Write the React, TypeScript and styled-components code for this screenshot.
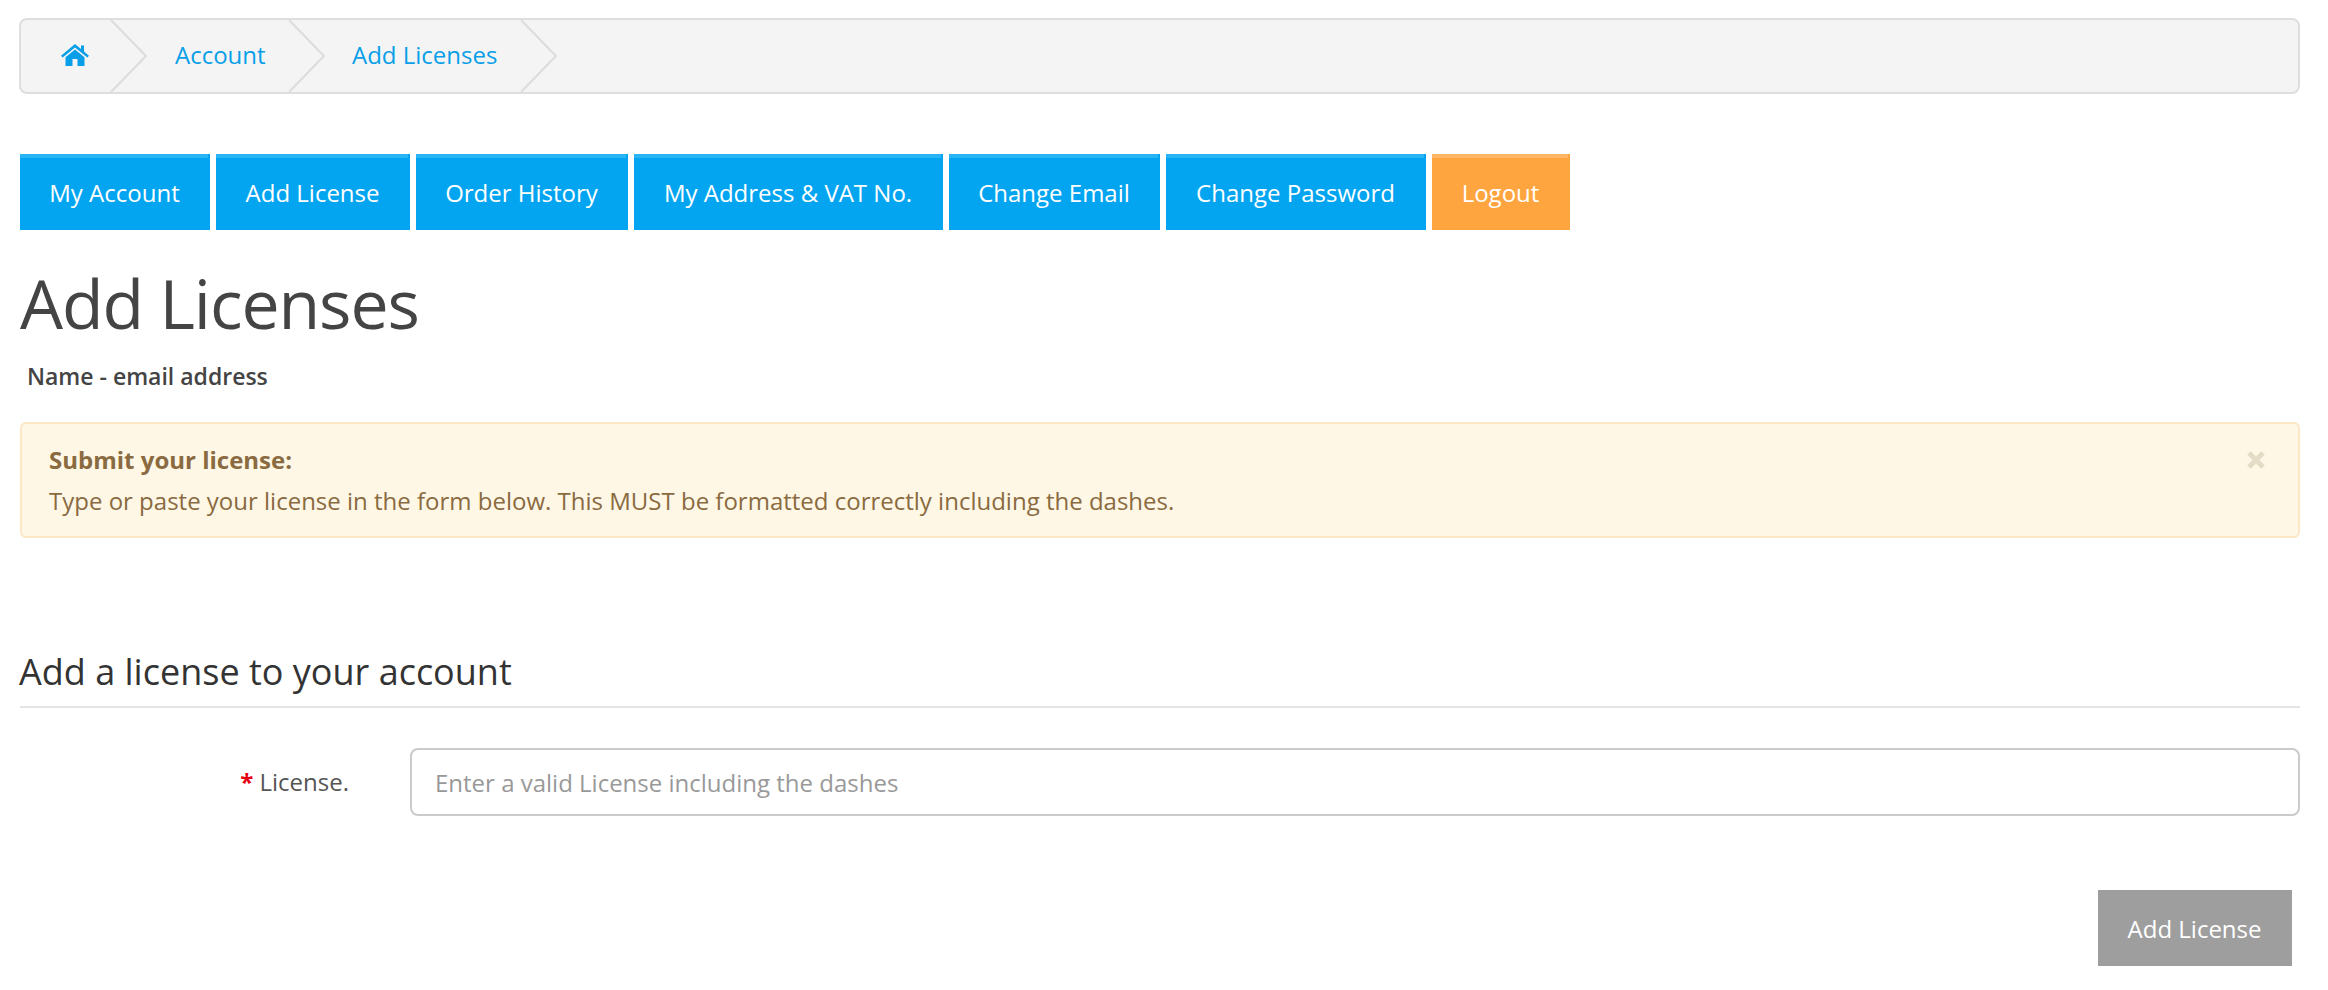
import React from "react";
import styled, { createGlobalStyle } from "styled-components";

const Global = createGlobalStyle`
  html, body { margin: 0; padding: 0; background: #fff; }
  body { font-family: "Open Sans", "Liberation Sans", sans-serif; }
`;

const Page = styled.div`
  width: 2328px;
  height: 990px;
  box-sizing: border-box;
  padding: 18px 28px 0 20px;
  overflow: hidden;
`;

const Breadcrumb = styled.nav`
  display: flex;
  align-items: stretch;
  box-sizing: border-box;
  height: 76px;
  background: #f4f4f4;
  border: 2px solid #dedede;
  border-radius: 8px;
  margin-left: -1px;
`;

const Crumb = styled.a<{ $width: number; $pad: number }>`
  position: relative;
  display: flex;
  align-items: center;
  box-sizing: border-box;
  width: ${(p) => p.$width}px;
  padding-left: ${(p) => p.$pad}px;
  padding-bottom: 2px;
  color: #089fe8;
  font-size: 24px;
  line-height: 1;
`;

const Chevron = styled.svg`
  position: absolute;
  top: 0;
  right: -38px;
  width: 38px;
  height: 72px;
`;

const Menu = styled.div`
  display: flex;
  gap: 6px;
  margin-top: 60px;
`;

const MenuButton = styled.a<{ $width: number; $tone: "blue" | "orange" }>`
  position: relative;
  display: flex;
  align-items: center;
  justify-content: center;
  box-sizing: border-box;
  width: ${(p) => p.$width}px;
  height: 76px;
  padding: 1px 1px 0 0;
  color: #fff;
  font-size: 24px;
  font-weight: 400;
  background: ${(p) => (p.$tone === "blue" ? "#03a5f0" : "#ffa540")};
  &::before {
    content: "";
    position: absolute;
    top: 0;
    left: 0;
    right: 2px;
    height: 4px;
    background: ${(p) => (p.$tone === "blue" ? "#29b4f5" : "#ffb765")};
  }
`;

const Title = styled.h1`
  margin: 27px 0 0;
  font-size: 68px;
  line-height: 92px;
  letter-spacing: -1.1px;
  font-weight: 400;
  color: #444;
`;

const UserLine = styled.div`
  margin: 12px 0 0 7px;
  font-size: 23px;
  line-height: 30px;
  font-weight: 600;
  color: #444;
`;

const Alert = styled.div`
  position: relative;
  box-sizing: border-box;
  height: 116px;
  margin-top: 31px;
  padding: 15px 27px 0;
  background: #fef7e6;
  border: 2px solid #fbe6c6;
  border-radius: 6px;
  color: #8a6a40;
  font-size: 24px;
  line-height: 41px;
`;

const AlertTitle = styled.strong`
  display: block;
  font-weight: 700;
`;

const Close = styled.svg`
  position: absolute;
  top: 26px;
  right: 32px;
  width: 20px;
  height: 20px;
`;

const SectionTitle = styled.h2`
  margin: 110px 0 0;
  padding-bottom: 11px;
  font-size: 36px;
  line-height: 47px;
  font-weight: 400;
  color: #333;
  border-bottom: 2px solid #e4e4e4;
`;

const SectionText = styled.span`
  display: block;
  margin-left: -1px;
`;

const FormRow = styled.div`
  display: flex;
  align-items: center;
  margin-top: 40px;
`;

const Label = styled.label`
  box-sizing: border-box;
  width: 390px;
  padding-right: 61px;
  text-align: right;
  color: #555;
  font-size: 24px;
  line-height: 32px;
`;

const Required = styled.span`
  color: #e60012;
  font-weight: 700;
`;

const Input = styled.input`
  flex: 1;
  box-sizing: border-box;
  height: 68px;
  padding: 0 23px;
  background: #fff;
  border: 2px solid #cbcbcb;
  border-radius: 8px;
  font-family: inherit;
  font-size: 24px;
  outline: none;
  &::placeholder { color: #999; opacity: 1; }
`;

const Actions = styled.div`
  display: flex;
  justify-content: flex-end;
  margin-top: 74px;
  padding-right: 8px;
`;

const Submit = styled.button`
  width: 194px;
  height: 76px;
  padding: 0 1px 0 0;
  background: #9e9e9e;
  border: 0;
  color: #fff;
  font-family: inherit;
  font-size: 24px;
`;

const HomeIcon = () => (
  <svg width="28" height="22" viewBox="0 0 28 22" fill="#089fe8" aria-hidden="true">
    <path d="M14 0 L20 5 V1.5 H23 V7.6 L28 11.8 L26.3 13.6 L14 3.4 L1.7 13.6 L0 11.8 Z" />
    <path d="M14 5.4 L23.5 13.2 V22 H16.5 V15 H11.5 V22 H4.5 V13.2 Z" />
  </svg>
);

const CrumbEnd = () => (
  <Chevron viewBox="0 0 38 72" aria-hidden="true">
    <path d="M1 0 L36 36 L1 72" fill="#f4f4f4" stroke="#dcdcdc" strokeWidth="2" />
  </Chevron>
);

const menu: { label: string; width: number; tone: "blue" | "orange" }[] = [
  { label: "My Account", width: 190, tone: "blue" },
  { label: "Add License", width: 194, tone: "blue" },
  { label: "Order History", width: 212, tone: "blue" },
  { label: "My Address & VAT No.", width: 309, tone: "blue" },
  { label: "Change Email", width: 211, tone: "blue" },
  { label: "Change Password", width: 260, tone: "blue" },
  { label: "Logout", width: 138, tone: "orange" },
];

export default function App() {
  return (
    <Page>
      <Global />
      <Breadcrumb>
        <Crumb $width={89} $pad={40}>
          <HomeIcon />
          <CrumbEnd />
        </Crumb>
        <Crumb $width={178} $pad={65}>
          Account
          <CrumbEnd />
        </Crumb>
        <Crumb $width={232} $pad={64}>
          Add Licenses
          <CrumbEnd />
        </Crumb>
      </Breadcrumb>
      <Menu>
        {menu.map((m) => (
          <MenuButton key={m.label} $width={m.width} $tone={m.tone}>
            {m.label}
          </MenuButton>
        ))}
      </Menu>
      <Title>Add Licenses</Title>
      <UserLine>Name - email address</UserLine>
      <Alert>
        <AlertTitle>Submit your license:</AlertTitle>
        Type or paste your license in the form below. This MUST be formatted correctly including the dashes.
        <Close viewBox="0 0 20 20" aria-hidden="true">
          <path d="M3 3 L17 17 M17 3 L3 17" stroke="#e4dcc6" strokeWidth="5" />
        </Close>
      </Alert>
      <SectionTitle>
        <SectionText>Add a license to your account</SectionText>
      </SectionTitle>
      <FormRow>
        <Label>
          <Required>*</Required> License.
        </Label>
        <Input placeholder="Enter a valid License including the dashes" />
      </FormRow>
      <Actions>
        <Submit>Add License</Submit>
      </Actions>
    </Page>
  );
}
